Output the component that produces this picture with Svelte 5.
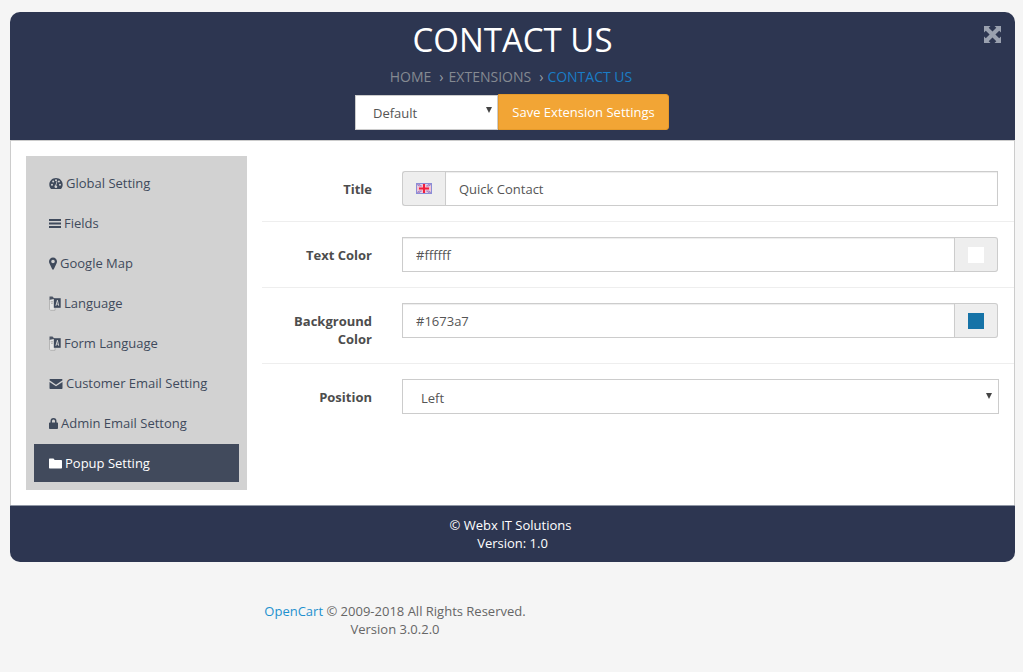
<script>
  const items = [
    { id: 'gauge', label: 'Global Setting' },
    { id: 'bars', label: 'Fields' },
    { id: 'marker', label: 'Google Map' },
    { id: 'lang', label: 'Language' },
    { id: 'lang', label: 'Form Language' },
    { id: 'mail', label: 'Customer Email Setting' },
    { id: 'lock', label: 'Admin Email Settong' },
    { id: 'folder', label: 'Popup Setting', active: true }
  ];
</script>

{#snippet icon(id)}
  {#if id === 'gauge'}
    <svg class="ic w14" viewBox="0 0 14 13"><path fill="currentColor" fill-rule="evenodd" d="M7 1C3.200 1 .3 3.900.3 7.600c0 1.600.5 3 1.500 4.200.2.200.4.200.7.200h9c.3 0 .5 0 .7-.2 1-1.200 1.500-2.600 1.500-4.200C13.700 3.900 10.800 1 7 1ZM3 8.800a1 1 0 1 1 0-2 1 1 0 0 1 0 2Zm1.200-3.300a1 1 0 1 1 0-2 1 1 0 0 1 0 2ZM7 4.200a1 1 0 1 1 0-2 1 1 0 0 1 0 2Zm1.300 5.500a1.400 1.400 0 1 1-1.900-1.400l1.200-3.900c.1-.3.900-.1.800.2L7.200 8.400c.5.200 1 .7 1.100 1.300Zm1.600-4.200a1 1 0 1 1 0-2 1 1 0 0 1 0 2ZM11 8.800a1 1 0 1 1 0-2 1 1 0 0 1 0 2Z"/></svg>
  {:else if id === 'bars'}
    <svg class="ic w12" viewBox="0 0 12 13"><path fill="currentColor" d="M0 2h12v2H0zM0 5.500h12v2H0zM0 9h12v2H0z"/></svg>
  {:else if id === 'marker'}
    <svg class="ic w8" viewBox="0 0 8 13"><path fill="currentColor" fill-rule="evenodd" d="M4 .5C1.800.5 0 2.300 0 4.500c0 .7.200 1.300.4 1.800l2.800 6c.3.600 1.300.600 1.600 0l2.800-6c.2-.5.400-1.100.4-1.800C8 2.300 6.200.5 4 .5Zm0 5.800a1.800 1.800 0 1 1 0-3.600 1.800 1.800 0 0 1 0 3.600Z"/></svg>
  {:else if id === 'lang'}
    <svg class="ic lang" viewBox="0 0 12 15"><path fill="#e6e6e6" stroke="#a3a3a3" stroke-width=".7" d="M.5 3.500 6 2.500v11.800H1.500l-1-1z"/><path fill="#4c5565" d="M.5 .5h3l2 2.300-5 .9z"/><path fill="#3f4a5c" d="M4.800 2.200h6.900v9.600H4.800z"/><path fill="#d2d2d2" d="M6.400 9.700 8 4h.8l1.400 5.700h-1l-.3-1.200H7.700l-.3 1.200zm1.500-2h.9L8.400 5.600z"/><path fill="#8a8a8a" d="M1.700 5.500h2.300v.7H1.700zM2 7.500h1.800v.6H2z"/></svg>
  {:else if id === 'mail'}
    <svg class="ic w14" viewBox="0 0 13 13"><path fill="currentColor" d="M1 2h11c.6 0 1 .4 1 1v.3L6.500 7.700 0 3.300V3c0-.6.400-1 1-1ZM0 4.900l6.500 4.300L13 4.900V11c0 .6-.4 1-1 1H1c-.6 0-1-.4-1-1Z"/></svg>
  {:else if id === 'lock'}
    <svg class="ic w9" viewBox="0 0 9 13"><path fill="currentColor" fill-rule="evenodd" d="M1.500 5.500V4a3 3 0 0 1 6 0v1.500H8c.5 0 1 .4 1 1V11c0 .6-.5 1-1 1H1c-.5 0-1-.4-1-1V6.500c0-.6.500-1 1-1Zm1.500 0h3V4a1.500 1.500 0 0 0-3 0Z"/></svg>
  {:else if id === 'folder'}
    <svg class="ic w13" viewBox="0 0 13 13"><path fill="currentColor" d="M1 1.500h3.500l1.200 1.500H12c.6 0 1 .4 1 1V10.500c0 .6-.4 1-1 1H1c-.6 0-1-.4-1-1V2.500c0-.6.400-1 1-1Z"/></svg>
  {/if}
{/snippet}

<div class="panel">
  <header class="head">
    <svg class="expand" viewBox="0 0 17 17" aria-hidden="true">
      <path fill="currentColor" d="M0 0h6.500L4.700 1.800 8.500 5.600 12.300 1.800 10.500 0H17v6.500l-1.800-1.800-3.800 3.800 3.800 3.800 1.800-1.800V17h-6.500l1.800-1.800-3.800-3.800-3.800 3.800L6.500 17H0v-6.500l1.800 1.800 3.800-3.800-3.800-3.800L0 6.500Z"/>
    </svg>
    <h1>CONTACT US</h1>
    <nav class="crumbs">
      <span>HOME</span><i>›</i><span>EXTENSIONS</span><i class="second">›</i><span class="here">CONTACT US</span>
    </nav>
    <div class="actions">
      <span class="pick store">
        <select><option>Default</option></select>
      </span>
      <button class="save">Save Extension Settings</button>
    </div>
  </header>

  <main class="body">
    <aside class="side">
      {#each items as item}
        <div class="item" class:active={item.active}>
          {@render icon(item.id)}<span>{item.label}</span>
        </div>
      {/each}
    </aside>

    <form class="form">
      <div class="row">
        <label for="t">Title</label>
        <div class="group">
          <span class="addon left">
            <svg class="flag" viewBox="0 0 16 11" aria-hidden="true">
              <rect width="16" height="11" fill="#e9d3e4"/>
              <path stroke="#7c80d6" stroke-width="2" d="M0 0l16 11M16 0 0 11"/>
              <path stroke="#f59ab0" stroke-width=".8" d="M0 0l16 11M16 0 0 11"/>
              <path stroke="#f6c3d0" stroke-width="4" d="M8 0v11M0 5.500h16"/>
              <path stroke="#f01c3c" stroke-width="2" d="M8 1v9M3 5.500h10"/>
              <rect x=".5" y=".5" width="15" height="10" fill="none" stroke="#8a8ed8"/>
            </svg>
          </span>
          <input id="t" value="Quick Contact" />
        </div>
      </div>
      <div class="row">
        <label for="c">Text Color</label>
        <div class="group">
          <input id="c" value="#ffffff" />
          <span class="addon right"><b class="swatch white"></b></span>
        </div>
      </div>
      <div class="row">
        <label for="b" class="two">Background Color</label>
        <div class="group">
          <input id="b" value="#1673a7" />
          <span class="addon right"><b class="swatch blue"></b></span>
        </div>
      </div>
      <div class="row last">
        <label for="p">Position</label>
        <span class="pick pos">
          <select id="p"><option>Left</option></select>
        </span>
      </div>
    </form>
  </main>

  <footer class="foot">
    <div class="owner">© Webx IT Solutions</div>
    <div>Version: 1.0</div>
  </footer>
</div>

<div class="credit">
  <div><a href="#top">OpenCart</a> © 2009-2018 All Rights Reserved.</div>
  <div>Version 3.0.2.0</div>
</div>

<style>
  :global(body) {
    background: #f5f5f5;
    font-family: "Open Sans", sans-serif;
    font-size: 13px;
    line-height: 18px;
    color: #555;
  }
  .panel {
    margin: 12px 8px 0 10px;
  }
  .head {
    position: relative;
    height: 128px;
    box-sizing: border-box;
    background: #2d3651;
    border-radius: 10px 10px 0 0;
    text-align: center;
    overflow: hidden;
  }
  .expand {
    position: absolute;
    right: 14px;
    top: 14px;
    width: 17px;
    height: 17px;
    color: #9aa1af;
  }
  h1 {
    margin: 8px 0 0;
    font-size: 33px;
    font-weight: 400;
    line-height: 40px;
    color: #fff;
  }
  .crumbs {
    margin-top: 7px;
    padding-right: 3px;
    font-size: 14px;
    line-height: 20px;
    color: #858a92;
  }
  .crumbs i {
    font-style: normal;
    color: #9a9ea6;
    margin: 0 5px 0 8px;
  }
  .crumbs i.second {
    margin-right: 4px;
  }
  .here {
    color: #1a7dc6;
  }
  .actions {
    display: flex;
    justify-content: center;
    align-items: center;
    margin-top: 7px;
    margin-left: -1px;
  }
  .pick {
    position: relative;
    display: block;
  }
  .pick::after {
    content: "";
    position: absolute;
    right: 6px;
    top: 12px;
    border-style: solid;
    border-width: 6px 3px 0;
    border-color: #444 transparent transparent;
    pointer-events: none;
  }
  .pos::after {
    right: 7px;
    top: 14px;
  }
  select {
    display: block;
    width: 100%;
    height: 35px;
    appearance: none;
    font: inherit;
    color: #555;
    background: #fff;
    box-sizing: border-box;
    border: 1px solid #ccc;
    border-radius: 0;
    padding: 2px 18px 0;
  }
  .store select {
    padding-left: 17px;
  }
  .store {
    width: 143px;
  }
  .save {
    width: 171px;
    height: 36px;
    box-sizing: border-box;
    font: inherit;
    color: #fff;
    background: #f2a535;
    border: 1px solid #e69a2a;
    border-radius: 0 3px 3px 0;
    padding: 0;
  }
  .body {
    display: flex;
    height: 365px;
    box-sizing: border-box;
    background: #fff;
    border: 1px solid #ccc;
    border-bottom: 0;
    padding: 15px 0 0 15px;
    gap: 15px;
  }
  .side {
    width: 221px;
    height: 334px;
    box-sizing: border-box;
    padding: 8px;
    background: #d2d2d2;
    display: flex;
    flex-direction: column;
    gap: 2px;
    flex: none;
  }
  .item {
    height: 38px;
    display: flex;
    align-items: center;
    gap: 3px;
    padding-left: 15px;
    color: #3f4a5c;
  }
  .item.active {
    background: #414a5c;
    color: #fff;
  }
  .ic {
    height: 13px;
    flex: none;
  }
  .ic.w14 { width: 14px; }
  .ic.w13 { width: 13px; }
  .ic.w12 { width: 12px; }
  .ic.w9 { width: 9px; }
  .ic.w8 { width: 8px; }
  .ic.lang { width: 12px; height: 15px; }
  .form {
    flex: 1;
    min-width: 0;
  }
  .row {
    display: flex;
    padding: 15px 16px 15px 0;
    border-bottom: 1px solid #eee;
  }
  .row.last {
    border-bottom: 0;
    padding-right: 15px;
  }
  label {
    width: 110px;
    flex: none;
    margin-right: 30px;
    padding-top: 9px;
    text-align: right;
    font-weight: 700;
    color: #4d4d4d;
  }
  .two {
    padding-left: 20px;
    box-sizing: border-box;
  }
  .group {
    flex: 1;
    display: flex;
    height: 35px;
    min-width: 0;
  }
  input {
    flex: 1;
    min-width: 0;
    box-sizing: border-box;
    height: 35px;
    font: inherit;
    color: #555;
    border: 1px solid #ccc;
    border-radius: 0;
    padding: 0 13px;
    outline: 0;
    box-shadow: inset 0 1px 1px rgba(0, 0, 0, 0.075);
  }
  .addon {
    flex: none;
    box-sizing: border-box;
    width: 43px;
    display: flex;
    align-items: center;
    justify-content: center;
    background: #eee;
    border: 1px solid #ccc;
  }
  .addon.left {
    border-right: 0;
    border-radius: 3px 0 0 3px;
  }
  .addon.right {
    border-left: 0;
    border-radius: 0 3px 3px 0;
  }
  .flag {
    width: 16px;
    height: 11px;
  }
  .swatch {
    width: 16px;
    height: 16px;
    display: block;
  }
  .white { background: #fff; }
  .blue { background: #1673a7; }
  .pos {
    flex: 1;
    min-width: 0;
  }
  .foot {
    height: 57px;
    box-sizing: border-box;
    padding-top: 10px;
    background: #2d3651;
    border-radius: 0 0 10px 10px;
    border-top: 1px solid #9097a5;
    text-align: center;
    color: #fff;
    font-weight: 500;
  }
  .owner {
    padding-right: 4px;
  }
  .credit {
    width: 790px;
    margin-top: 40px;
    text-align: center;
    color: #666;
  }
  a {
    color: #1e91cf;
    text-decoration: none;
  }
</style>
